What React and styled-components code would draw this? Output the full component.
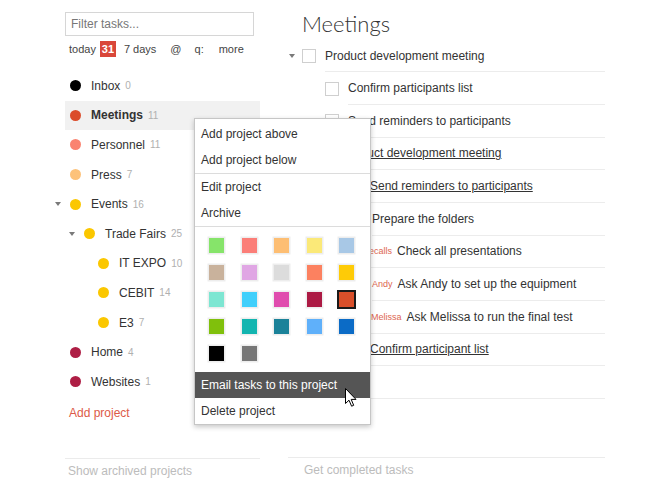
import React from "react";
import styled, { createGlobalStyle, css } from "styled-components";

const Global = createGlobalStyle`
  body {
    margin: 0;
    background: #fff;
    font-family: "Liberation Sans", Arial, sans-serif;
    color: #333;
  }
`;

const Page = styled.div`
  position: relative;
  display: flex;
  width: 650px;
  height: 491px;
  padding-left: 65px;
  box-sizing: border-box;
  overflow: hidden;
`;

const Sidebar = styled.div`
  width: 195px;
  display: flex;
  flex-direction: column;
`;

const Filter = styled.input`
  margin-top: 12px;
  width: 189px;
  height: 24px;
  box-sizing: border-box;
  border: 1px solid #d6d6d6;
  padding: 0 5px;
  font: 12px "Liberation Sans", Arial, sans-serif;
  color: #333;
  outline: none;
  &::placeholder {
    color: #777;
  }
`;

const Quick = styled.div`
  margin-top: 6px;
  height: 14px;
  display: flex;
  align-items: center;
  font-size: 11px;
  color: #444;
  padding-left: 4px;
`;

const QuickLink = styled.span`
  margin-left: ${(p) => p.$gap || 0}px;
`;

const Badge = styled.span`
  margin-left: 4px;
  width: 16px;
  height: 16px;
  background: #d9473a;
  color: #fff;
  font-weight: bold;
  font-size: 11px;
  display: flex;
  align-items: center;
  justify-content: center;
`;

const ProjectList = styled.div`
  margin-top: 15px;
  display: flex;
  flex-direction: column;
`;

const ProjectRow = styled.div`
  height: 29.6px;
  display: flex;
  align-items: center;
  padding-left: ${(p) => 4.5 + p.$depth * 14}px;
  font-size: 12px;
  background: ${(p) => (p.$active ? "#f1f1f1" : "transparent")};
  font-weight: ${(p) => (p.$active ? "bold" : "normal")};
`;

const CaretSlot = styled.span`
  width: 14.5px;
  margin-left: -14.5px;
  display: flex;
  align-items: center;
`;

const Caret = styled.span`
  width: 0;
  height: 0;
  border-left: 3.5px solid transparent;
  border-right: 3.5px solid transparent;
  border-top: 4px solid #7a7a7a;
`;

const Dot = styled.span`
  width: 11px;
  height: 11px;
  border-radius: 50%;
  background: ${(p) => p.$color};
  margin-right: 10.5px;
  flex-shrink: 0;
`;

const Count = styled.span`
  margin-left: 5px;
  font-size: 10px;
  font-weight: normal;
  color: #b0b0b0;
`;

const AddProject = styled.div`
  margin-top: 1.5px;
  height: 29.6px;
  display: flex;
  align-items: center;
  padding-left: 4px;
  font-size: 12px;
  color: #dc5a48;
`;

const FootLink = styled.div`
  margin-top: ${(p) => p.$top}px;
  border-top: 1px solid #ebebeb;
  padding-top: 5px;
  line-height: 14px;
  font-size: 12px;
  color: #bcbcbc;
  padding-left: ${(p) => p.$pad || 0}px;
`;

const Main = styled.div`
  margin-left: 28px;
  width: 317px;
  display: flex;
  flex-direction: column;
`;

const Title = styled.h1`
  margin: 0 0 2.7px;
  padding: 11px 0 0 14px;
  line-height: 26px;
  height: 26px;
  font-family: Lato, "Liberation Sans", sans-serif;
  font-weight: 300;
  font-size: 22px;
  color: #333;
`;

const TaskRow = styled.div`
  height: 32.67px;
  display: flex;
  align-items: stretch;
  padding-left: ${(p) => p.$x - 288 - 23}px;
`;

const TaskCaret = styled.span`
  width: 14px;
  margin-left: -14px;
  display: flex;
  align-items: center;
  padding-left: 1px;
  box-sizing: border-box;
`;

const Check = styled.span`
  align-self: center;
  width: 14px;
  height: 14px;
  box-sizing: border-box;
  border: 1px solid #cfcfcf;
  background: #fff;
  margin-right: 9px;
  flex-shrink: 0;
  visibility: ${(p) => (p.$hide ? "hidden" : "visible")};
`;

const TaskText = styled.div`
  flex: 1;
  display: flex;
  align-items: center;
  border-bottom: 1px solid #ececec;
  font-size: 12px;
  color: #333;
  white-space: nowrap;
  ${(p) =>
    p.$link &&
    css`
      text-decoration: underline;
    `}
`;

const Label = styled.span`
  font-size: 9px;
  color: #dd6650;
  margin-right: 5px;
`;

const Menu = styled.div`
  position: absolute;
  left: 194px;
  top: 118px;
  width: 177px;
  box-sizing: border-box;
  background: #fff;
  border: 1px solid #c6c6c6;
  box-shadow: 0 2px 5px rgba(0, 0, 0, 0.22);
  padding-top: 2px;
  z-index: 5;
`;

const MenuItem = styled.div`
  height: ${(p) => p.$h || 26}px;
  display: flex;
  align-items: center;
  padding-left: 6px;
  font-size: 12px;
  color: ${(p) => (p.$hover ? "#fff" : "#333")};
  background: ${(p) => (p.$hover ? "#555" : "transparent")};
`;

const MenuSep = styled.div`
  height: 1px;
  background: #dcdcdc;
`;

const Swatches = styled.div`
  display: grid;
  grid-template-columns: repeat(5, 15px);
  column-gap: 17.5px;
  row-gap: 12px;
  padding: 11px 14px 11px;
`;

const Swatch = styled.span`
  width: 15px;
  height: 15px;
  background: ${(p) => p.$color};
  box-shadow: ${(p) =>
    p.$selected ? "0 0 0 2px #1a1a1a" : "0 0 0 1.5px rgba(0,0,0,0.07)"};
`;

const Cursor = styled.svg`
  position: absolute;
  left: 345px;
  top: 388px;
  z-index: 6;
`;

const projects = [
  { name: "Inbox", count: 0, color: "#000", depth: 0 },
  { name: "Meetings", count: 11, color: "#db4c2b", depth: 0, active: true },
  { name: "Personnel", count: 11, color: "#fa8370", depth: 0 },
  { name: "Press", count: 7, color: "#fdc27a", depth: 0 },
  { name: "Events", count: 16, color: "#fbc700", depth: 0, open: true },
  { name: "Trade Fairs", count: 25, color: "#fbc700", depth: 1, open: true },
  { name: "IT EXPO", count: 10, color: "#fbc700", depth: 2 },
  { name: "CEBIT", count: 14, color: "#fbc700", depth: 2 },
  { name: "E3", count: 7, color: "#fbc700", depth: 2 },
  { name: "Home", count: 4, color: "#ae1e45", depth: 0 },
  { name: "Websites", count: 1, color: "#ae1e45", depth: 0 },
];

const tasks = [
  { x: 325, text: "Product development meeting", caret: true },
  { x: 348, text: "Confirm participants list" },
  { x: 348, text: "Send reminders to participants" },
  { x: 342, text: "Product development meeting", link: true },
  { x: 370, text: "Send reminders to participants", link: true },
  { x: 372, text: "Prepare the folders" },
  { x: 366, text: "Check all presentations", label: "recalls" },
  { x: 372, text: "Ask Andy to set up the equipment", label: "Andy" },
  { x: 371, text: "Ask Melissa to run the final test", label: "Melissa" },
  { x: 370, text: "Confirm participant list", link: true },
  { x: 370, text: "", empty: true },
];

const swatches = [
  "#86e46a", "#fb7e78", "#fdbe73", "#fbe978", "#a8c8e6",
  "#c9b29c", "#e0a6e4", "#dcdcdc", "#fc8160", "#fecb07",
  "#7de6d2", "#40cffb", "#e04cae", "#ac1a44", "#d94f2a",
  "#80c00c", "#13b5b0", "#1b8299", "#5fb0fa", "#0b6bc6",
  "#000000", "#777777",
];

export default function App() {
  return (
    <Page>
      <Global />
      <Sidebar>
        <Filter placeholder="Filter tasks..." />
        <Quick>
          <QuickLink>today</QuickLink>
          <Badge>31</Badge>
          <QuickLink $gap={8}>7 days</QuickLink>
          <QuickLink $gap={14}>@</QuickLink>
          <QuickLink $gap={13}>q:</QuickLink>
          <QuickLink $gap={15}>more</QuickLink>
        </Quick>
        <ProjectList>
          {projects.map((p) => (
            <ProjectRow key={p.name} $depth={p.depth} $active={p.active}>
              <CaretSlot>{p.open && <Caret />}</CaretSlot>
              <Dot $color={p.color} />
              {p.name}
              <Count>{p.count}</Count>
            </ProjectRow>
          ))}
        </ProjectList>
        <AddProject>Add project</AddProject>
        <FootLink $top={30} $pad={3}>Show archived projects</FootLink>
      </Sidebar>

      <Main>
        <Title>Meetings</Title>
        {tasks.map((t, i) => (
          <TaskRow key={i} $x={t.x}>
            {t.caret && (
              <TaskCaret>
                <Caret />
              </TaskCaret>
            )}
            <Check $hide={t.empty} />
            <TaskText $link={t.link}>
              {t.label && <Label>{t.label}</Label>}
              {t.text}
            </TaskText>
          </TaskRow>
        ))}
        <FootLink $top={58} $pad={16}>Get completed tasks</FootLink>
      </Main>

      <Menu>
        <MenuItem>Add project above</MenuItem>
        <MenuItem>Add project below</MenuItem>
        <MenuSep />
        <MenuItem>Edit project</MenuItem>
        <MenuItem>Archive</MenuItem>
        <MenuSep />
        <Swatches>
          {swatches.map((c, i) => (
            <Swatch key={i} $color={c} $selected={i === 14} />
          ))}
        </Swatches>
        <MenuItem $hover>Email tasks to this project</MenuItem>
        <MenuItem>Delete project</MenuItem>
      </Menu>

      <Cursor width="12" height="19" viewBox="0 0 12 19">
        <path
          d="M0.5 0.5 L0.5 15.5 L4 12.2 L6.6 18.2 L8.7 17.3 L6.2 11.4 L11 11.4 Z"
          fill="#fff"
          stroke="#000"
          strokeWidth="1"
          strokeLinejoin="round"
        />
      </Cursor>
    </Page>
  );
}
